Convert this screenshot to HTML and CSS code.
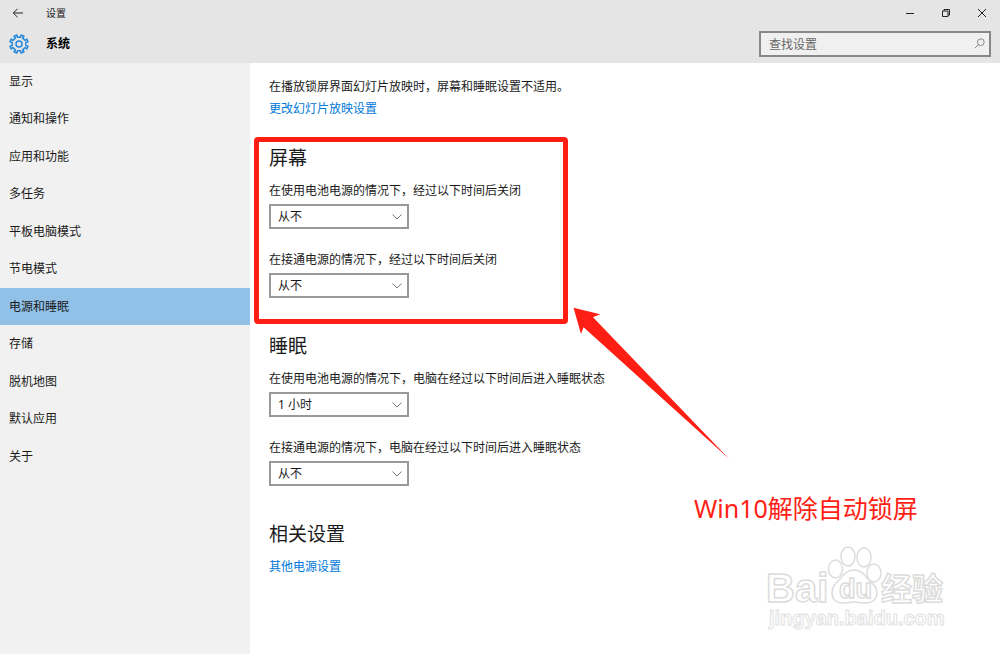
FILE: index.html
```html
<!DOCTYPE html>
<html lang="zh-CN">
<head>
    <meta charset="UTF-8">
    <meta name="viewport" content="width=device-width, initial-scale=1.0">
    <title>设置</title>
    <link rel="stylesheet" href="styles.css">
</head>
<body>
    <header class="header">
        <div class="titlebar">
            <button class="icon-btn back" type="button" aria-label="返回">
                <svg width="12" height="10" viewBox="0 0 12 10"><path d="M5.5 0.8L1.3 5l4.2 4.2M1.3 5H11"/></svg>
            </button>
            <span class="title">设置</span>
            <div class="window-buttons">
                <button class="icon-btn" type="button" aria-label="最小化">
                    <svg width="10" height="10" viewBox="0 0 10 10"><path d="M1 5.5h8"/></svg>
                </button>
                <button class="icon-btn" type="button" aria-label="还原">
                    <svg width="10" height="10" viewBox="0 0 10 10"><path d="M1.5 3h5.5v5.5H1.5zM3 3V1.5h5.5V7H7"/></svg>
                </button>
                <button class="icon-btn" type="button" aria-label="关闭">
                    <svg width="10" height="10" viewBox="0 0 10 10"><path d="M1 1l8 8M9 1L1 9"/></svg>
                </button>
            </div>
        </div>
        <div class="toolbar">
            <svg class="gear" width="20" height="20" viewBox="0 0 20 20">
                <path d="M8.5 3.2L7.9 1 5 2.2 6.5 3.9 3.9 6.5 2.2 5 1 7.9 3.2 8.5V11.500L1 12.100 2.200 15 3.900 13.500 6.500 16.100 5 17.800 7.900 19 8.500 16.800H11.500L12.100 19 15 17.800 13.500 16.100 16.100 13.500 17.800 15 19 12.100 16.800 11.500V8.500L19 7.900 17.800 5 16.100 6.500 13.500 3.900 15 2.200 12.100 1 11.500 3.200Z"/>
                <circle cx="10" cy="10" r="3"/>
            </svg>
            <h1>系统</h1>
            <div class="search">
                <input type="search" placeholder="查找设置" aria-label="查找设置">
                <svg width="11" height="11" viewBox="0 0 11 11"><circle cx="6.800" cy="4.200" r="3.400"/><path d="M4.400 6.600L0.800 10.200"/></svg>
            </div>
        </div>
    </header>

    <div class="content">
        <nav class="sidebar">
            <a href="#">显示</a>
            <a href="#">通知和操作</a>
            <a href="#">应用和功能</a>
            <a href="#">多任务</a>
            <a href="#">平板电脑模式</a>
            <a href="#">节电模式</a>
            <a href="#" class="active">电源和睡眠</a>
            <a href="#">存储</a>
            <a href="#">脱机地图</a>
            <a href="#">默认应用</a>
            <a href="#">关于</a>
        </nav>

        <main class="main">
            <p class="intro">在播放锁屏界面幻灯片放映时，屏幕和睡眠设置不适用。</p>
            <p class="intro"><a href="#">更改幻灯片放映设置</a></p>

            <section class="group highlighted">
                <h2>屏幕</h2>
                <div class="field">
                    <label for="screen-battery">在使用电池电源的情况下，经过以下时间后关闭</label>
                    <select id="screen-battery"><option>从不</option></select>
                </div>
                <div class="field">
                    <label for="screen-plugged">在接通电源的情况下，经过以下时间后关闭</label>
                    <select id="screen-plugged"><option>从不</option></select>
                </div>
            </section>

            <section class="group">
                <h2>睡眠</h2>
                <div class="field">
                    <label for="sleep-battery">在使用电池电源的情况下，电脑在经过以下时间后进入睡眠状态</label>
                    <select id="sleep-battery"><option>1 小时</option></select>
                </div>
                <div class="field">
                    <label for="sleep-plugged">在接通电源的情况下，电脑在经过以下时间后进入睡眠状态</label>
                    <select id="sleep-plugged"><option>从不</option></select>
                </div>
            </section>

            <section class="group">
                <h2>相关设置</h2>
                <a href="#">其他电源设置</a>
            </section>

            <!-- 页面上的标注 -->
            <svg class="arrow" width="158" height="154" viewBox="0 0 158 154">
                <path d="M0.500 0.700L27.200 7.300 20 10.300 156 151.700 10.600 20.300 8 27Z"/>
            </svg>
            <p class="note">Win10解除自动锁屏</p>
            <svg class="watermark" width="190" height="90" viewBox="0 0 190 90">
                <ellipse cx="72.500" cy="26" rx="7" ry="9"/>
                <ellipse cx="85" cy="13.500" rx="7" ry="9.500"/>
                <ellipse cx="101" cy="14.500" rx="7" ry="9.500"/>
                <ellipse cx="111" cy="30" rx="7" ry="9"/>
                <path d="M91 27c-8 0-11 6-15 10-4 4-7 7-7 13 0 7 5 10 11 10 5 0 7-1 11-1s7 1 12 1c6 0 11-4 11-10s-4-9-8-13-7-10-15-10z"/>
                <text class="wm-big" x="3" y="59">Bai</text>
                <text class="wm-du" x="76" y="55">du</text>
                <text class="wm-cn" x="118" y="57">经验</text>
                <text class="wm-url" x="6" y="82">jingyan.baidu.com</text>
            </svg>
        </main>
    </div>
</body>
</html>
```
FILE: styles.css
```css
* {
    box-sizing: border-box;
}
body {
    margin: 0;
    min-height: 100vh;
    display: flex;
    flex-direction: column;
    font-family: "Noto Sans", "Noto Sans CJK SC", sans-serif;
    font-size: 12px;
    line-height: 20px;
    color: #1a1a1a;
    background: #fff;
}
h1, h2, p {
    margin: 0;
}
a {
    color: #0078d7;
    text-decoration: none;
}
svg {
    fill: none;
}

/* header */
.header {
    background: #e5e5e5;
}
.titlebar {
    display: flex;
    align-items: center;
    height: 25px;
}
.title {
    font-size: 10px;
    margin-left: 10px;
}
.icon-btn {
    display: flex;
    align-items: center;
    justify-content: center;
    width: 36px;
    height: 25px;
    padding: 0;
    border: none;
    background: none;
    stroke: #222;
}
.window-buttons {
    display: flex;
    margin-left: auto;
}
.toolbar {
    display: flex;
    align-items: center;
    height: 38px;
    padding: 0 9px;
}
.gear {
    stroke: #2488dc;
    stroke-width: 1.5;
    stroke-linejoin: round;
}
h1 {
    font-size: 12px;
    margin-left: 17px;
    color: #000;
}
.search {
    position: relative;
    width: 232px;
    margin-left: auto;
}
.search input {
    display: block;
    width: 100%;
    height: 26px;
    padding: 0 26px 0 8px;
    border: 2px solid #888;
    border-radius: 0;
    background: #f0f0f0;
    font: inherit;
    appearance: none;
}
.search input::placeholder {
    color: #666;
}
.search svg {
    position: absolute;
    right: 6px;
    top: 7px;
    stroke: #888;
}

/* layout */
.content {
    display: flex;
    flex: 1;
}
.sidebar {
    width: 250px;
    flex-shrink: 0;
    background: #f1f1f1;
}
.sidebar a {
    display: flex;
    align-items: center;
    height: 37px;
    padding-left: 9px;
    color: #1a1a1a;
}
.sidebar a:nth-child(even) {
    height: 38px;
}
.sidebar a.active {
    background: #91c1e7;
}
.main {
    position: relative;
    flex: 1;
    padding: 13px 19px;
}
.intro {
    line-height: 22px;
}

/* settings groups */
.group {
    position: relative;
    margin-bottom: 36px;
}
.intro + .group {
    margin-top: 26px;
}
h2 {
    font-size: 19px;
    font-weight: normal;
    line-height: 24px;
    margin-bottom: 11px;
}
.field + .field {
    margin-top: 21px;
}
.field label {
    display: block;
    margin-bottom: 3px;
}
.field select {
    display: block;
    width: 140px;
    height: 25px;
    padding: 0 7px;
    border: 2px solid #999;
    border-radius: 0;
    font: inherit;
    color: #1a1a1a;
    appearance: none;
    background: #fff url("data:image/svg+xml,%3Csvg xmlns='http://www.w3.org/2000/svg' width='10' height='6'%3E%3Cpath d='M0.500 0.500L5 5l4.500-4.500' fill='none' stroke='%23777'/%3E%3C/svg%3E") no-repeat right 5px center;
}

/* annotations */
.highlighted::before {
    content: "";
    position: absolute;
    box-sizing: border-box;
    left: -15px;
    top: -9px;
    width: 314px;
    bottom: -26px;
    border: 5px solid #ff1e14;
    border-radius: 4px;
    pointer-events: none;
}
.arrow {
    position: absolute;
    left: 323px;
    top: 244px;
    fill: #ff1e14;
}
.note {
    position: absolute;
    left: 444px;
    top: 429px;
    font-size: 25px;
    line-height: 32px;
    white-space: nowrap;
    color: #ff1e14;
}
.watermark {
    position: absolute;
    left: 513px;
    top: 480px;
    fill: #fff;
    stroke: #dcdcdc;
    stroke-width: 1.5;
    font-family: "Liberation Sans", "Noto Sans CJK SC", sans-serif;
    font-weight: bold;
}
.wm-big {
    font-size: 40px;
}
.wm-du {
    font-size: 27px;
}
.wm-cn {
    font-size: 31px;
}
.wm-url {
    font-size: 20px;
    stroke: #e2e2e2;
    stroke-width: 1;
}
```
